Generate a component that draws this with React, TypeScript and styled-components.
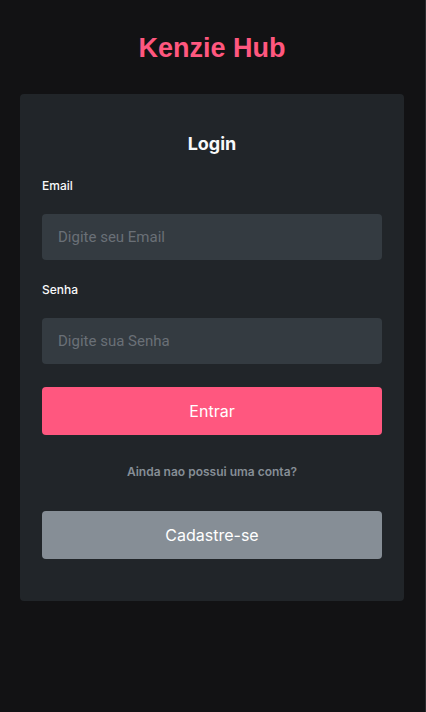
import React from "react";
import styled, { createGlobalStyle } from "styled-components";

const Global = createGlobalStyle`
  * { box-sizing: border-box; }
  html, body { margin: 0; padding: 0; background: #121214; }
  body { font-family: Inter, "Noto Sans", sans-serif; }
`;

const Page = styled.main`
  display: flex;
  flex-direction: column;
  align-items: flex-start;
  padding: 33px 20px 0;
  min-height: 712px;
  box-shadow: inset -1px 0 0 #2a2b2e;
`;

const Brand = styled.h1`
  margin: 0;
  width: 384px;
  text-align: center;
  height: 30px;
  line-height: 30px;
  font-family: "Liberation Sans", Arial, sans-serif;
  font-size: 27px;
  font-weight: 700;
  color: #ff577f;
`;

const Card = styled.section`
  margin-top: 31px;
  width: 384px;
  background: #212529;
  border-radius: 4px;
  padding: 39px 22px 42px;
  display: flex;
  flex-direction: column;
`;

const Title = styled.h2`
  margin: 0 0 23px;
  text-align: center;
  font-size: 18px;
  line-height: 22px;
  font-weight: 700;
  color: #f8f9fa;
`;

const Label = styled.label`
  display: block;
  font-size: 12px;
  line-height: 16px;
  font-weight: 500;
  color: #f8f9fa;
  margin: 0 0 20px;
`;

const Input = styled.input<{ $mb: number }>`
  width: 100%;
  height: 46px;
  border: 0;
  outline: 0;
  border-radius: 4px;
  background: #343b41;
  padding: 0 16px;
  font-family: Roboto, "Liberation Sans", sans-serif;
  font-size: 15px;
  color: #f8f9fa;
  margin-bottom: ${(p) => p.$mb}px;
  &::placeholder { color: #6a7077; }
`;

const Button = styled.button<{ $variant: "primary" | "gray" }>`
  width: 100%;
  height: 48px;
  border: 0;
  border-radius: 4px;
  font-family: Inter, sans-serif;
  font-size: 16px;
  font-weight: 400;
  color: #fff;
  background: ${(p) => (p.$variant === "primary" ? "#ff577f" : "#868e96")};
  cursor: pointer;
`;

const Hint = styled.p`
  margin: 29px 0 31px;
  text-align: center;
  font-size: 12px;
  line-height: 16px;
  font-weight: 600;
  color: #868e96;
`;

export default function App() {
  return (
    <>
      <Global />
      <Page>
        <Brand>Kenzie Hub</Brand>
        <Card>
          <Title>Login</Title>
          <Label htmlFor="email">Email</Label>
          <Input id="email" $mb={22} placeholder="Digite seu Email" />
          <Label htmlFor="senha">Senha</Label>
          <Input id="senha" type="password" $mb={23} placeholder="Digite sua Senha" />
          <Button $variant="primary">Entrar</Button>
          <Hint>Ainda nao possui uma conta?</Hint>
          <Button $variant="gray">Cadastre-se</Button>
        </Card>
      </Page>
    </>
  );
}
